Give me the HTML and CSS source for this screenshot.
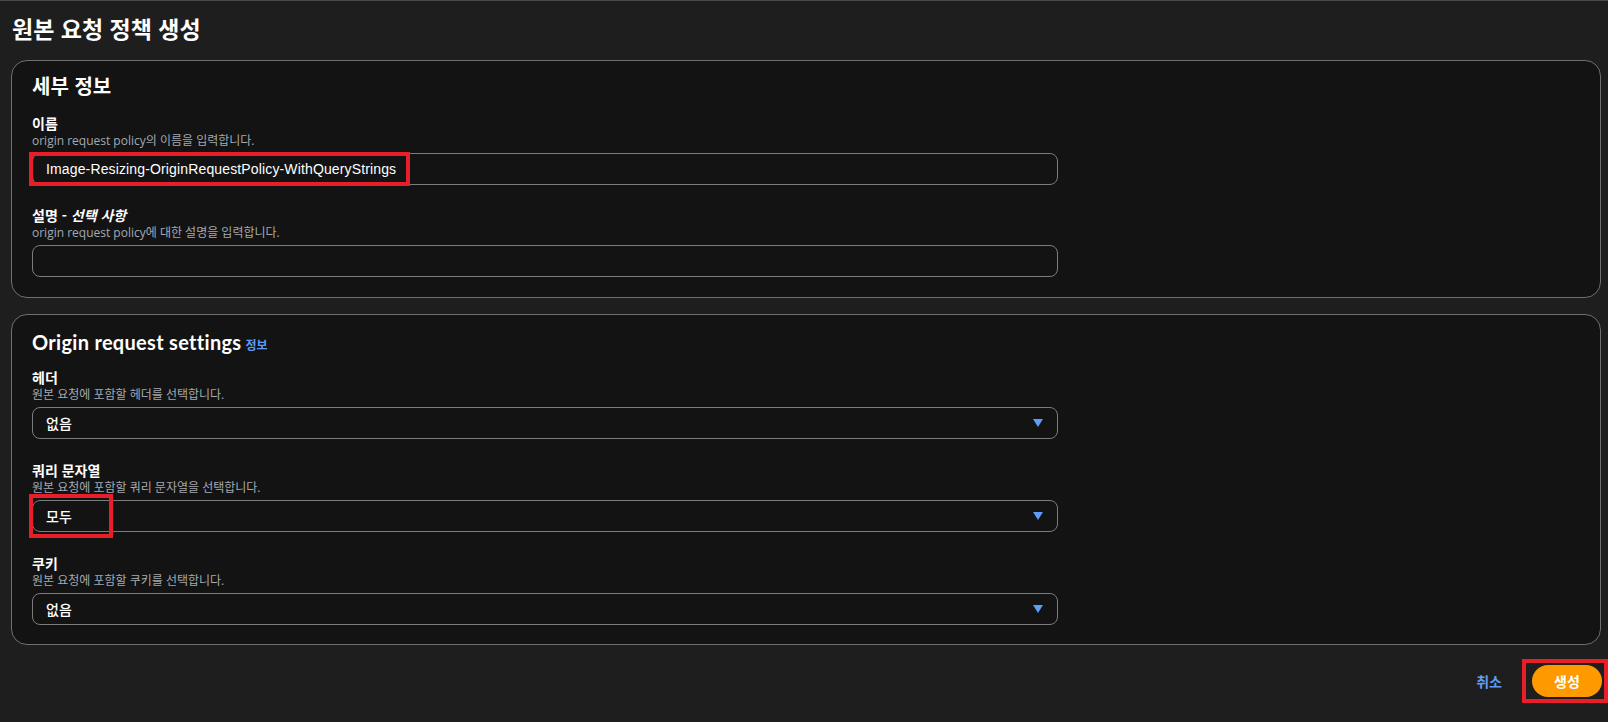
FILE: index.html
```html
<!DOCTYPE html>
<html lang="ko">
<head>
<meta charset="utf-8">
<title>원본 요청 정책 생성</title>
<link rel="stylesheet" href="styles.css">
</head>
<body>
<div class="page">
  <h1 class="title">원본 요청 정책 생성</h1>

  <section class="panel">
    <h2 class="panel-title">세부 정보</h2>
    <div class="field">
      <div class="label">이름</div>
      <div class="desc">origin request policy의 이름을 입력합니다.</div>
      <div class="control">
        <div class="input">Image-Resizing-OriginRequestPolicy-WithQueryStrings</div>
        <div class="mark mark-name"></div>
      </div>
    </div>
    <div class="field">
      <div class="label">설명 - <i>선택 사항</i></div>
      <div class="desc">origin request policy에 대한 설명을 입력합니다.</div>
      <div class="control">
        <div class="input"></div>
      </div>
    </div>
  </section>

  <section class="panel panel-settings">
    <h2 class="panel-title latin">Origin request settings <a class="info">정보</a></h2>
    <div class="field">
      <div class="label">헤더</div>
      <div class="desc">원본 요청에 포함할 헤더를 선택합니다.</div>
      <div class="control">
        <div class="input select"><span>없음</span><span class="caret"></span></div>
      </div>
    </div>
    <div class="field">
      <div class="label">쿼리 문자열</div>
      <div class="desc">원본 요청에 포함할 쿼리 문자열을 선택합니다.</div>
      <div class="control">
        <div class="input select"><span>모두</span><span class="caret"></span></div>
        <div class="mark mark-query"></div>
      </div>
    </div>
    <div class="field">
      <div class="label">쿠키</div>
      <div class="desc">원본 요청에 포함할 쿠키를 선택합니다.</div>
      <div class="control">
        <div class="input select"><span>없음</span><span class="caret"></span></div>
      </div>
    </div>
  </section>

  <div class="actions">
    <a class="cancel">취소</a>
    <div class="submit-wrap">
      <button class="submit">생성</button>
      <div class="mark mark-submit"></div>
    </div>
  </div>
</div>
</body>
</html>
```

FILE: styles.css
```css
* { box-sizing: border-box; }
html, body {
  margin: 0;
  padding: 0;
  background: #1e1e1e;
}
body {
  font-family: "Noto Sans", "Noto Sans CJK KR", sans-serif;
  color: #ffffff;
  border-top: 1px solid #4a4a4a;
  min-height: 722px;
}
.page {
  padding: 0 7px 0 11px;
}
.title {
  margin: 0;
  padding: 12px 0 0 1px;
  height: 59px;
  font-size: 23px;
  line-height: 30px;
  font-weight: 700;
  font-family: "Noto Sans CJK KR", sans-serif;
}
.panel {
  background: #131313;
  border: 1px solid #6f6f6f;
  border-radius: 16px;
  padding: 13px 20px 20px 20px;
  margin-bottom: 16px;
}
.panel-settings {
  padding-bottom: 19px;
}
.panel-settings .field {
  margin-bottom: 21px;
}
.panel-settings .field:last-child {
  margin-bottom: 0;
}
.panel-title {
  margin: 0 0 15px 0;
  font-size: 20px;
  line-height: 24px;
  font-weight: 700;
  font-family: "Noto Sans CJK KR", sans-serif;
  display: flex;
  align-items: baseline;
  gap: 4px;
}
.panel-title.latin {
  font-family: "Lato", "Noto Sans CJK KR", sans-serif;
  letter-spacing: 0.3px;
  padding-top: 2px;
  margin-bottom: 10px;
}
.info {
  color: #5f9cf7;
  font-size: 12px;
  font-weight: 700;
  letter-spacing: 0;
  font-family: "Noto Sans CJK KR", sans-serif;
}
.field {
  width: 1026px;
  margin-bottom: 20px;
}
.field:last-child { margin-bottom: 0; }
.label {
  font-size: 14px;
  line-height: 20px;
  font-weight: 700;
  font-family: "Noto Sans CJK KR", sans-serif;
  color: #ffffff;
}
.label i { font-style: italic; }
.desc {
  font-size: 12px;
  line-height: 16px;
  color: #a3a9b1;
  margin-bottom: 4px;
  font-family: "Open Sans", "Noto Sans CJK KR", sans-serif;
}
.control {
  position: relative;
}
.input {
  height: 32px;
  border: 1px solid #7c7c7c;
  border-radius: 8px;
  background: #131313;
  padding: 0 14px 0 13px;
  display: flex;
  align-items: center;
  font-size: 14px;
  letter-spacing: 0.14px;
  color: #ffffff;
  font-family: "Liberation Sans", "Noto Sans CJK KR", sans-serif;
}
.select {
  justify-content: space-between;
  font-family: "Noto Sans CJK KR", sans-serif;
  font-weight: 500;
  letter-spacing: 0;
}
.caret {
  width: 0;
  height: 0;
  border-left: 5px solid transparent;
  border-right: 5px solid transparent;
  border-top: 8px solid #5f9cf7;
}
.mark {
  position: absolute;
  border: 4px solid #e81e28;
  pointer-events: none;
}
.mark-name {
  left: -3px;
  top: -1px;
  width: 381px;
  height: 34px;
}
.mark-query {
  left: -3px;
  top: -6px;
  width: 84px;
  height: 44px;
}
.actions {
  display: flex;
  justify-content: flex-end;
  align-items: center;
  gap: 30px;
  padding-top: 4px;
  margin-right: -1px;
}
.cancel {
  color: #5f9cf7;
  font-weight: 700;
  font-size: 14px;
  font-family: "Noto Sans CJK KR", sans-serif;
}
.submit-wrap {
  position: relative;
}
.submit {
  display: block;
  width: 70px;
  height: 32px;
  border: none;
  border-radius: 16px;
  background: #ff9900;
  color: #ffffff;
  font-weight: 700;
  font-size: 14px;
  font-family: "Noto Sans CJK KR", sans-serif;
  padding: 0;
}
.mark-submit {
  left: -10px;
  top: -6px;
  width: 86px;
  height: 44px;
}
```
